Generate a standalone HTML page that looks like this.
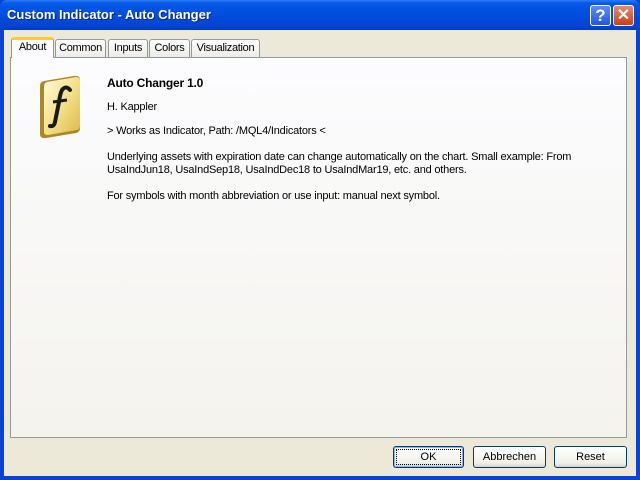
<!DOCTYPE html>
<html><head><style>
*{margin:0;padding:0;box-sizing:border-box}
body{width:640px;height:480px;overflow:hidden;background:#0842d6;font-family:Tahoma,"Liberation Sans",sans-serif;font-size:11px;color:#000;position:relative}
.title{position:absolute;left:0;top:0;width:640px;height:30px;background:linear-gradient(#2a7df5 0,#0a5ae8 3px,#0054e3 8px,#0048d8 20px,#0043cf 28px,#003ab8 30px);border-radius:7px 7px 0 0}
.title span{position:absolute;left:7px;top:7px;color:#fff;font-weight:bold;font-size:13px;text-shadow:1px 1px #0a2a80}
.client{position:absolute;left:4px;top:30px;width:632px;height:446px;background:#ece9d8}
.panel{position:absolute;left:10px;top:57px;width:617px;height:381px;border:1px solid #919b9c;background:linear-gradient(#fcfcfe,#f4f3ee);}
.tab{position:absolute;top:39px;height:18px;border:1px solid #919b9c;border-bottom:none;border-radius:3px 3px 0 0;background:linear-gradient(#fff,#ecebe6);padding-top:2px;text-align:center;font-size:11px;letter-spacing:-0.3px;font-family:"Liberation Sans",sans-serif}
.tab.act{top:37px;height:21px;background:#fcfcfe;border-top:3px solid #ffc83c;z-index:2;padding-top:1px}
.btn{position:absolute;top:446px;height:22px;border:1px solid #003c74;border-radius:3px;background:linear-gradient(#fff,#f0f0ea 80%,#d6d0c5);text-align:center;line-height:20px;font-family:"Liberation Sans",sans-serif;font-size:11px}
.tb{position:absolute;top:5px;width:21px;height:21px;border:1px solid #fff;border-radius:3px;color:#fff;font-weight:bold;text-align:center;font-family:"Liberation Sans",sans-serif}
p{position:absolute;left:107px;font-family:"Liberation Sans",sans-serif;font-size:11px;letter-spacing:-0.2px}
</style></head><body>
<div class="title"><span>Custom Indicator - Auto Changer</span>
<div class="tb" style="left:590px;background:linear-gradient(#5a8cf8,#2456de);font-size:17px;line-height:19px">?</div>
<div class="tb" style="left:613px;background:linear-gradient(#e88a6a,#c8401c);font-size:16px;line-height:19px">✕</div>
</div>
<div class="client"></div>
<div class="panel"></div>
<div class="tab act" style="left:11px;width:43px">About</div>
<div class="tab" style="left:55px;width:51px">Common</div>
<div class="tab" style="left:108px;width:40px">Inputs</div>
<div class="tab" style="left:149px;width:41px">Colors</div>
<div class="tab" style="left:191px;width:69px">Visualization</div>
<svg style="position:absolute;left:36px;top:72px" width="50" height="70" viewBox="0 0 50 70">
<defs><linearGradient id="g" x1="0" y1="0" x2="1" y2="1"><stop offset="0" stop-color="#fffbe0"/><stop offset="0.5" stop-color="#f5e08a"/><stop offset="1" stop-color="#dcb848"/></linearGradient></defs>
<path d="M4 14 Q4 10 8 9 L38 4 Q44 3 44 8 L44 56 Q44 60 40 61 L10 66 Q4 67 4 62 Z" fill="#a8882a"/>
<path d="M8 14 Q8 11 11 10 L40 5 Q44 5 44 9 L44 54 Q44 57 41 58 L12 63 Q8 63 8 60 Z" fill="url(#g)"/>
<path d="M34 18 Q30 13 26 18 Q24 22 23 30 L19 50 Q18 55 14 54" fill="none" stroke="#1a1a1a" stroke-width="4" stroke-linecap="round"/>
<path d="M17 30 L31 28" stroke="#1a1a1a" stroke-width="3"/>
</svg>
<p style="top:76px;font-weight:bold;font-size:12px">Auto Changer 1.0</p>
<p style="top:101px">H. Kappler</p>
<p style="top:125px">&gt; Works as Indicator, Path: /MQL4/Indicators &lt;</p>
<p style="top:151px;width:490px;line-height:13px">Underlying assets with expiration date can change automatically on the chart. Small example: From UsaIndJun18, UsaIndSep18, UsaIndDec18 to UsaIndMar19, etc. and others.</p>
<p style="top:190px">For symbols with month abbreviation or use input: manual next symbol.</p>
<div class="btn" style="left:393px;width:71px;box-shadow:inset 0 0 0 1px #8cb4f2;outline:1px dotted #000;outline-offset:-4px">OK</div>
<div class="btn" style="left:473px;width:73px">Abbrechen</div>
<div class="btn" style="left:554px;width:73px">Reset</div>
</body></html>
